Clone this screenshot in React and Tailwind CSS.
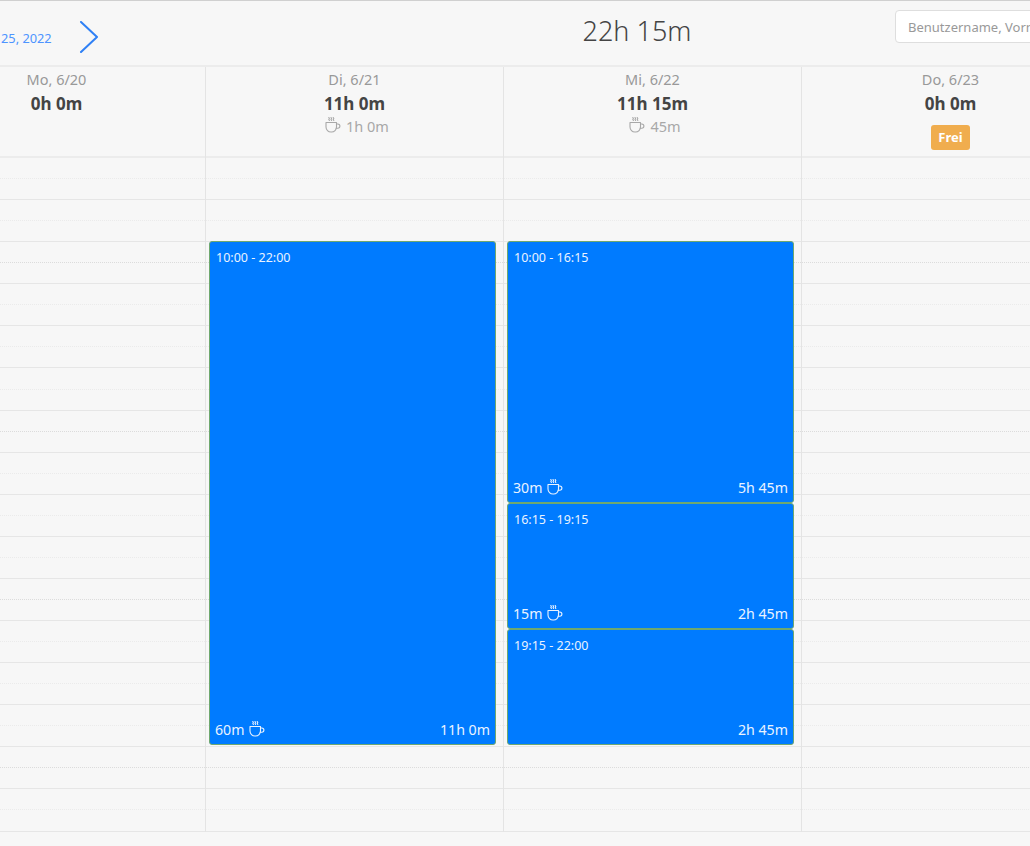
const CupIcon = ({ className }) => (
  <svg className={className} viewBox="0 0 16 16" fill="none" stroke="currentColor" strokeWidth="1.100" strokeLinecap="round" strokeLinejoin="round">
    <path d="M1 5.500h10.500v4.500a5 5 0 0 1-5 5h-.5a5 5 0 0 1-5-5z" />
    <path d="M11.500 7h1.300a2 2 0 0 1 0 4.200h-1.700" />
    <path d="M3.800 .5l.6 1-.6 1 .6 1" />
    <path d="M6 .5l.6 1-.6 1 .6 1" />
    <path d="M8.200 .5l.6 1-.6 1 .6 1" />
  </svg>
);

const days = [
  { label: "Mo, 6/20", total: "0h 0m" },
  { label: "Di, 6/21", total: "11h 0m", pause: "1h 0m" },
  { label: "Mi, 6/22", total: "11h 15m", pause: "45m" },
  { label: "Do, 6/23", total: "0h 0m", free: true },
];

// top and height in px, relative to the grid
const shifts = {
  "Di, 6/21": [{ time: "10:00 - 22:00", top: 83, height: 504, pause: "60m", duration: "11h 0m" }],
  "Mi, 6/22": [
    { time: "10:00 - 16:15", top: 83, height: 262, pause: "30m", duration: "5h 45m" },
    { time: "16:15 - 19:15", top: 345, height: 126, pause: "15m", duration: "2h 45m" },
    { time: "19:15 - 22:00", top: 471, height: 116, duration: "2h 45m" },
  ],
};

const rows = Array.from({ length: 32 }, (_, i) => i);

function rowClass(i) {
  if (i % 8 === 4) return "border-b border-dotted border-[#dcdcdc]";
  if (i % 2 === 0) return "border-b border-dotted border-[#ebebeb]";
  return "border-b border-[#e6e6e6]";
}

function Shift({ shift }) {
  return (
    <div
      className="absolute left-[3px] w-[287px] flex flex-col justify-between bg-[#007bff] border border-[#6fa86f] rounded-[3px] text-[#eaf3ff] px-[5px] pt-[7px] pb-[4px]"
      style={{ top: shift.top, height: shift.height }}
    >
      <div className="text-[12.500px] leading-[18px] pl-[1px]">{shift.time}</div>
      <div className="flex items-center justify-between text-[14.200px] leading-[20px]">
        <div className="flex items-center gap-[4px]">
          {shift.pause && (
            <>
              <span>{shift.pause}</span>
              <CupIcon className="w-[16px] h-[16px] -mt-[2px]" />
            </>
          )}
        </div>
        <span>{shift.duration}</span>
      </div>
    </div>
  );
}

export default function App() {
  return (
    <div className="w-[1030px] h-[846px] overflow-hidden bg-[#f7f7f7] font-['Noto_Sans','Open_Sans',sans-serif]">
      {/* Top bar */}
      <div className="h-[67px] flex border-t border-[#d0d0d0] border-b-2 border-b-[#ececec] box-border">
        <div className="w-[537px] shrink-0 flex items-center">
          <span className="text-[12.800px] text-[#4d94ff] ml-[1px] mt-[12px]">25, 2022</span>
          <svg className="w-[20px] h-[32px] ml-[27px] mt-[8px]" viewBox="0 0 20 32" fill="none" stroke="#2f80f5" strokeWidth="2" strokeLinecap="round" strokeLinejoin="round">
            <path d="M2 1l16 15L2 31" />
          </svg>
        </div>
        <div className="w-[200px] shrink-0 text-center text-[27px] leading-[60px] font-light text-[#444]">22h 15m</div>
        <input
          className="w-[200px] h-[33px] shrink-0 ml-[158px] mt-[9px] bg-white border border-[#dedede] rounded-[4px] px-[12px] text-[13px] outline-none placeholder:text-[#999]"
          placeholder="Benutzername, Vorname"
        />
      </div>

      {/* Week columns */}
      <div className="flex -ml-[92px]">
        {days.map((day) => (
          <div key={day.label} className="w-[298px] shrink-0 border-r border-[#e4e4e4] box-border">
            <div className="h-[91px] flex flex-col items-center border-b-2 border-[#ececec] text-center pt-[2px]">
              <div className="text-[14.500px] leading-[20px] text-[#999]">{day.label}</div>
              <div className="mt-[3px] text-[17px] leading-[24px] font-bold text-[#444]">{day.total}</div>
              {day.pause && (
                <div className="flex items-center gap-[5px] text-[14.500px] leading-[20px] text-[#a8a8a8] pl-[5px]">
                  <CupIcon className="w-[16px] h-[16px] -mt-[2px]" />
                  <span>{day.pause}</span>
                </div>
              )}
              {day.free && (
                <div className="mt-[9px] h-[25px] px-[7px] rounded-[3px] bg-[#f0ad4e] text-white text-[13px] leading-[25px] font-bold">Frei</div>
              )}
            </div>
            <div className="relative">
              {rows.map((i) => (
                <div key={i} className={`h-[21.060px] box-border ${rowClass(i)}`} />
              ))}
              {(shifts[day.label] || []).map((shift) => (
                <Shift key={shift.time} shift={shift} />
              ))}
            </div>
          </div>
        ))}
      </div>
    </div>
  );
}
